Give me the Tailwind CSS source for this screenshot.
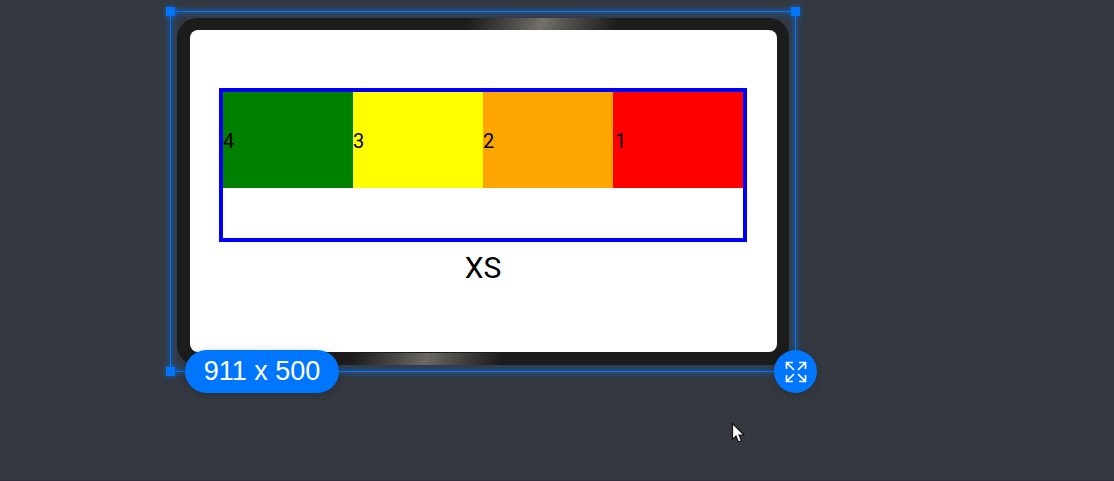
<!DOCTYPE html>
<html lang="en">
<head>
<meta charset="utf-8">
<meta name="viewport" content="width=device-width, initial-scale=1">
<title>Device preview</title>
<script src="https://cdn.jsdelivr.net/npm/@tailwindcss/browser@4"></script>
</head>
<body class="min-h-screen overflow-hidden border-b border-[#332f3c] bg-[#343941] pt-[11px] pr-[318px] pl-[170px] font-['Roboto',sans-serif] text-black">
<main class="relative border border-[#0076ff] px-[6px] pt-[6px] pb-[6px] shadow-[0_0_7px_#0076ff99,inset_0_0_8px_#0076ff99]">
  <section class="relative overflow-hidden rounded-[20px] bg-[#1c1c1c] pt-3 pr-3 pb-[13px] pl-[13px]" aria-label="Device">
    <div class="absolute top-0 left-[290px] h-3 w-[150px] -skew-x-[20deg] bg-linear-to-r from-[#1c1c1c] via-[#736f69] to-[#1c1c1c]"></div>
    <div class="absolute bottom-0 left-[174px] h-3 w-[150px] -skew-x-[20deg] bg-linear-to-r from-[#1c1c1c] via-[#6c6963] to-[#1c1c1c]"></div>
    <div class="relative rounded-lg bg-white pt-[58px] pr-[30px] pb-[68px] pl-[29px]">
      <div class="h-[154px] border-4 border-[#0000fa]">
        <div class="grid h-24 grid-cols-4 text-[20px]">
          <div class="flex items-center bg-[#008000] pt-px">4</div>
          <div class="flex items-center bg-[#ffff00] pt-px">3</div>
          <div class="flex items-center bg-[#ffa500] pt-px">2</div>
          <div class="flex items-center bg-[#ff0000] pt-px pl-[2px]">1</div>
        </div>
      </div>
      <p class="pt-[10px] text-center text-[30px] leading-8">XS</p>
    </div>
  </section>
  <span class="absolute -top-[5px] -left-[5px] size-[9px] bg-[#0076ff] shadow-[0_0_6px_#0076ffaa]"></span>
  <span class="absolute -top-[5px] -right-[5px] size-[9px] bg-[#0076ff] shadow-[0_0_6px_#0076ffaa]"></span>
  <span class="absolute -bottom-[5px] -left-[5px] size-[9px] bg-[#0076ff] shadow-[0_0_6px_#0076ffaa]"></span>
  <output class="absolute -bottom-[22px] left-[14px] flex h-[43px] w-[154px] items-center justify-center rounded-full bg-[#0076ff] font-['Liberation_Sans',sans-serif] text-[27px] text-white shadow-[0_2px_8px_#0003]">911 x 500</output>
  <button type="button" aria-label="Resize" class="absolute -right-[22px] -bottom-[22px] flex size-[43px] items-center justify-center rounded-full bg-[#0076ff] text-white shadow-[0_2px_8px_#0003]">
    <svg class="size-[22px]" viewBox="0 0 22 22" fill="none" stroke="currentColor" stroke-width="1.7" aria-hidden="true">
      <path d="M8 1.500H1.500V8M1.500 1.500l7.500 7.500M14 1.500h6.500V8M20.500 1.500L13 9M8 20.500H1.500V14M1.500 20.500L9 13M14 20.500h6.500V14M20.500 20.500L13 13"/>
    </svg>
  </button>
</main>
<svg class="absolute top-[422px] left-[731px] h-[21px] w-[14px]" viewBox="0 0 14 21" fill="#fff" stroke="#111" stroke-width="1.2" aria-hidden="true">
  <path d="M1.500 1.500v16l3.500-3.500 2.500 6 3-1.300-2.500-5.700h5z"/>
</svg>
</body>
</html>
